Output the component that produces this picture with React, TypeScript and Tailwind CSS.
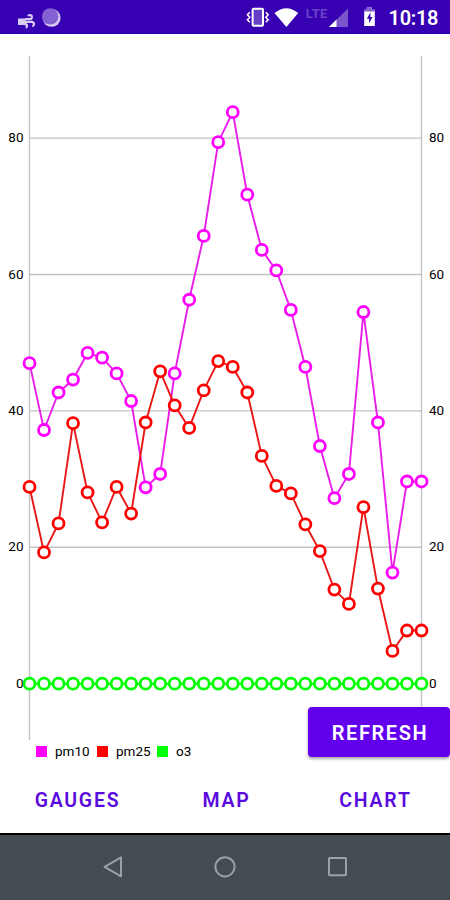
import React from "react";

const WIDTH = 450;
const LEFT = 29.5;
const RIGHT = 421.5;
const ZERO_Y = 649.7;
const PX_PER_UNIT = 6.82;

const pm10 = [
  47, 37.2, 42.7, 44.6, 48.5, 47.8, 45.5, 41.45, 28.8, 30.75, 45.5, 56.3, 65.65, 79.4,
  83.8, 71.7, 63.6, 60.6, 54.8, 46.45, 34.85, 27.2, 30.75, 54.5, 38.3, 16.3, 29.65, 29.65,
];
const pm25 = [
  28.85, 19.25, 23.5, 38.2, 28.05, 23.65, 28.85, 24.95, 38.3, 45.8, 40.8, 37.5, 43, 47.3,
  46.45, 42.7, 33.4, 29, 27.9, 23.35, 19.45, 13.8, 11.7, 25.9, 13.95, 4.8, 7.8, 7.8,
];
const o3 = pm10.map(() => 0);

const series = [
  { name: "pm10", color: "#ff00ff", line: "#ea1cea", values: pm10 },
  { name: "pm25", color: "#ff0000", line: "#ea1616", values: pm25 },
  { name: "o3", color: "#00ff00", line: "#00ff00", values: o3 },
];

const toX = (i: number) => LEFT + (i * (RIGHT - LEFT)) / (pm10.length - 1);
const toY = (v: number) => ZERO_Y - v * PX_PER_UNIT;

function StatusBar() {
  return (
    <header className="flex h-[34px] shrink-0 items-center border-b border-[#2500a5] bg-[#3700b3] text-white">
      <svg width="450" height="33" viewBox="0 0 450 33" className="block">
        {/* wind + moon notifications */}
        <path d="M18 18.5h7.5v6.5H18Z" fill="#d9ccf3" />
        <g fill="none" stroke="#d9ccf3" strokeWidth="2.2">
          <path d="M25 19.2h5c2.6 0 2.4-4.2 0-4.2-1.1 0-1.7.5-1.9 1.3" />
          <path d="M25 21.8h6.6c3 0 3 4.2.6 4.2" />
          <path d="M24 24.2h1.6c2 0 1.8 3.2 0 3.2" />
        </g>
        <circle cx="51.6" cy="17.8" r="9" fill="#d6c9f2" />
        <circle cx="50.2" cy="16.4" r="8.2" fill="#8461d3" />
        {/* vibrate */}
        <g fill="none" stroke="#fff" strokeWidth="1.5">
          <rect x="252.6" y="8.8" width="10.4" height="17" rx="1" strokeWidth="2" fill="#6540c6" />
          <path d="M249.8 12.2l-2.4 2.5 2.4 2.5-2.4 2.5 2.4 2.6M265.8 12.2l2.4 2.5-2.4 2.5 2.4 2.5-2.4 2.6" />
        </g>
        {/* wifi */}
        <path d="M274.5 13Q286.3 3.6 298.2 13L286.4 27Z" fill="#fff" />
        <text x="305.8" y="18" fontSize="13" fontWeight="700" fill="#6b43c8" fontFamily="Roboto, sans-serif" textLength="21.5">LTE</text>
        {/* signal */}
        <path d="M329 27L348 8.5V27Z" fill="#7a56cc" />
        <path d="M329 27L336.5 19.5V27Z" fill="#fff" />
        {/* battery */}
        <path d="M366.8 7.5h5v2.3h3V26h-10.6V9.8h2.6Z" fill="#fff" />
        <path d="M366.8 7.5h5v2.3h3v1.7h-10.6V9.8h2.6Z" fill="#8261cf" />
        <path d="M370.4 12.2l-3.5 6.6h2.2v4.5l3.4-6.4h-2.1Z" fill="#3700b3" />
        <text x="388.5" y="25.2" fontSize="20" fontWeight="600" fill="#fff" fontFamily="Roboto, sans-serif" textLength="50">10:18</text>
      </svg>
    </header>
  );
}

function LineChart() {
  return (
    <svg width={WIDTH} height="706" viewBox={`0 0 ${WIDTH} 706`} className="block shrink-0">
      <g stroke="#c2c2c2" strokeWidth="1.4">
        {[20, 40, 60, 80].map(v => (
          <line key={v} x1={LEFT} x2={RIGHT} y1={toY(v)} y2={toY(v)} />
        ))}
        <line x1={LEFT} x2={LEFT} y1="22" y2="706" />
        <line x1={RIGHT} x2={RIGHT} y1="22" y2="706" />
      </g>
      <g fontSize="13.5" fill="#000" fontFamily="Roboto, sans-serif">
        {[0, 20, 40, 60, 80].map(v => (
          <React.Fragment key={v}>
            <text x="23.5" y={toY(v) + 4} textAnchor="end">{v}</text>
            <text x="429" y={toY(v) + 4}>{v}</text>
          </React.Fragment>
        ))}
      </g>
      {series.map(s => (
        <polyline
          key={s.name}
          points={s.values.map((v, i) => `${toX(i)},${toY(v)}`).join(" ")}
          fill="none"
          stroke={s.line}
          strokeWidth="1.9"
        />
      ))}
      {series.map(s => (
        <g key={s.name} fill="#fff" stroke={s.color} strokeWidth="2.8">
          {s.values.map((v, i) => (
            <circle key={i} cx={toX(i)} cy={toY(v)} r="5.5" />
          ))}
        </g>
      ))}
    </svg>
  );
}

function Legend() {
  return (
    <div className="flex h-6 shrink-0 items-center pb-px pl-[36px] text-[13.5px] text-black">
      <span className="mr-2 h-[11px] w-[11px] bg-[#ff00ff]"></span>
      <span className="w-[42px]">pm10</span>
      <span className="mr-2 h-[11px] w-[11px] bg-[#ff0000]"></span>
      <span className="w-[41px]">pm25</span>
      <span className="mr-2 h-[11px] w-[11px] bg-[#00ff00]"></span>
      <span>o3</span>
    </div>
  );
}

export default function App() {
  return (
    <div className="flex h-[900px] w-[450px] flex-col overflow-hidden bg-white font-[Roboto,sans-serif]">
      <StatusBar />
      <main className="relative flex flex-col">
        <LineChart />
        <Legend />
        <button className="absolute right-0 bottom-[7px] h-[50px] w-[142px] rounded-[4px] bg-[#6200ee] pt-px pl-[2px] text-[20px] font-semibold tracking-[1.6px] text-white shadow-[0_2px_3px_rgba(0,0,0,0.35)]">
          REFRESH
        </button>
      </main>
      <nav className="grid h-[69px] shrink-0 grid-cols-3 pt-[5px] pl-[3px] text-[19.5px] font-semibold tracking-[1.75px] text-[#5a0ade]">
        <button>GAUGES</button>
        <button>MAP</button>
        <button>CHART</button>
      </nav>
      <footer className="flex h-[67px] shrink-0 items-center justify-center border-t-2 border-black bg-[#454c51]">
        <svg width="450" height="65" viewBox="0 0 450 65" fill="none" stroke="#9ba1a5" strokeWidth="2">
          <path d="M104.5 31.8L121 22.3V41.3Z" strokeLinejoin="round" />
          <circle cx="225" cy="31.8" r="9.6" />
          <rect x="329" y="23" width="17" height="17.2" rx="0.6" />
        </svg>
      </footer>
    </div>
  );
}
